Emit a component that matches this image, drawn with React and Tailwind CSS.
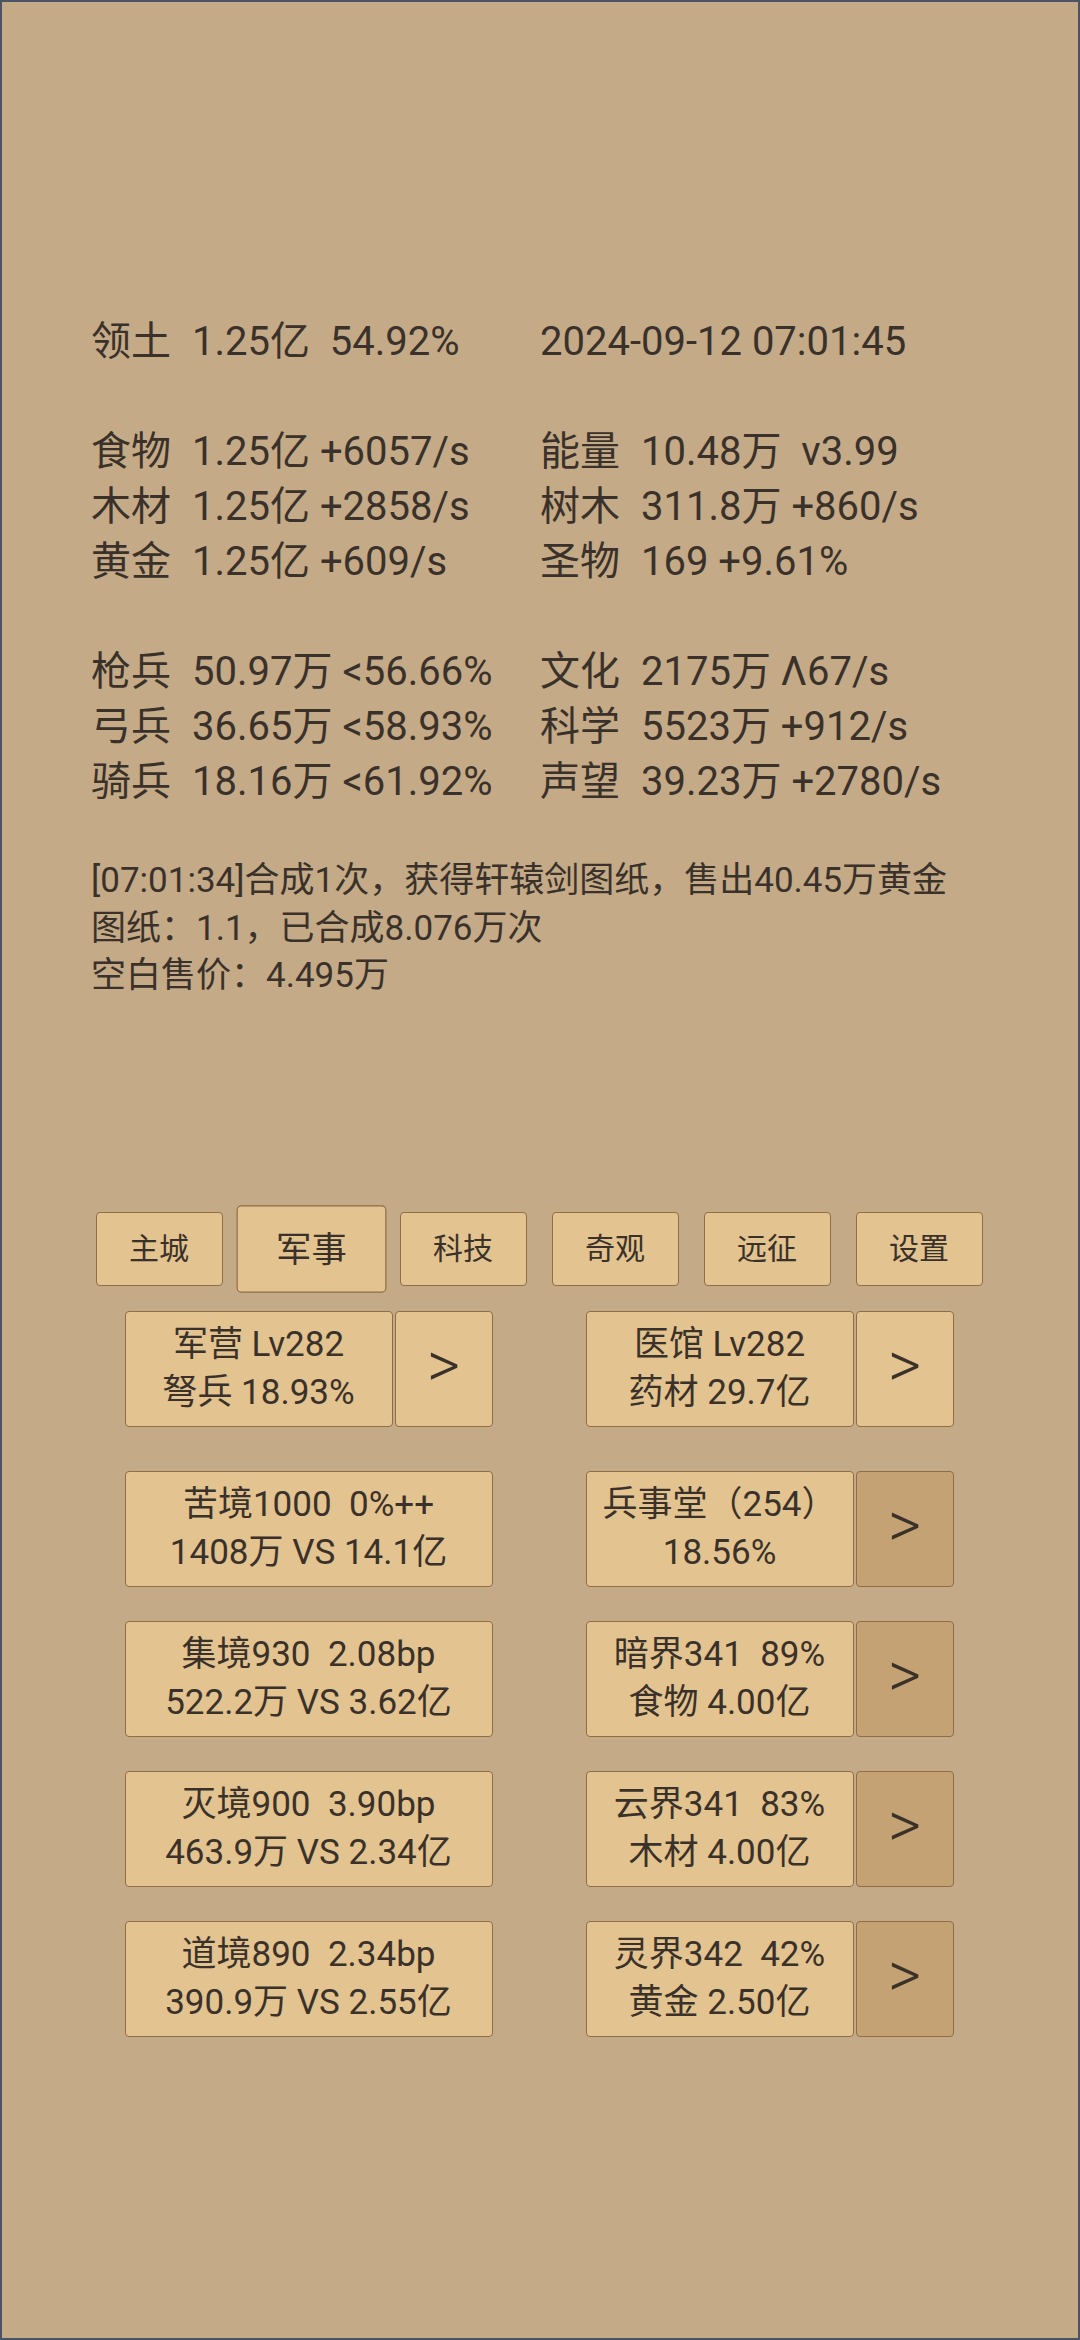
import React from "react";

const font = { fontFamily: "Roboto, 'Noto Sans CJK SC', sans-serif" };

function Stat({ label, value }) {
  return (
    <div className="flex whitespace-pre">
      <span className="w-[101px] shrink-0">{label}</span>
      <span>{value}</span>
    </div>
  );
}

function Btn({ children, className = "" }) {
  return (
    <div
      className={
        "flex flex-col items-center justify-center rounded-[4px] border border-[#8d6e47] text-center whitespace-pre " +
        className
      }
    >
      {children}
    </div>
  );
}

function Arrow({ dark }) {
  return (
    <Btn
      className={
        "w-[98px] h-[116px] text-[64px] font-light leading-none " +
        (dark ? "bg-[#c4a273]" : "bg-[#e3c38f]")
      }
    >
      <span className="-mt-[6px]">&gt;</span>
    </Btn>
  );
}

function Card({ l1, l2, w }) {
  return (
    <Btn className={"h-[116px] bg-[#e3c38f] text-[35px] leading-[48px] " + w}>
      <div>{l1}</div>
      <div>{l2}</div>
    </Btn>
  );
}

export default function App() {
  const tabs = ["主城", "军事", "科技", "奇观", "远征", "设置"];
  const rows = [
    { l: ["苦境1000  0%++", "1408万 VS 14.1亿"], r: ["兵事堂（254）", "18.56%"] },
    { l: ["集境930  2.08bp", "522.2万 VS 3.62亿"], r: ["暗界341  89%", "食物 4.00亿"] },
    { l: ["灭境900  3.90bp", "463.9万 VS 2.34亿"], r: ["云界341  83%", "木材 4.00亿"] },
    { l: ["道境890  2.34bp", "390.9万 VS 2.55亿"], r: ["灵界342  42%", "黄金 2.50亿"] },
  ];
  return (
    <div
      style={font}
      className="w-[1080px] h-[2340px] bg-[#c4aa87] border-2 border-[#4a5466] text-[#3a322a] overflow-hidden"
    >
      <div className="pl-[89px] pt-[312px] text-[40px] leading-[55px]">
        <div className="grid grid-cols-[449px_auto]">
          <Stat label="领土" value="1.25亿  54.92%" />
          <div className="whitespace-pre">2024-09-12 07:01:45</div>
          <div className="h-[55px]" />
          <div className="h-[55px]" />
          <Stat label="食物" value="1.25亿 +6057/s" />
          <Stat label="能量" value="10.48万  v3.99" />
          <Stat label="木材" value="1.25亿 +2858/s" />
          <Stat label="树木" value="311.8万 +860/s" />
          <Stat label="黄金" value="1.25亿 +609/s" />
          <Stat label="圣物" value="169 +9.61%" />
          <div className="h-[55px]" />
          <div className="h-[55px]" />
          <Stat label="枪兵" value="50.97万 <56.66%" />
          <Stat label="文化" value="2175万 Λ67/s" />
          <Stat label="弓兵" value="36.65万 <58.93%" />
          <Stat label="科学" value="5523万 +912/s" />
          <Stat label="骑兵" value="18.16万 <61.92%" />
          <Stat label="声望" value="39.23万 +2780/s" />
        </div>
        <div className="mt-[48px] text-[35px] leading-[47.5px]">
          <div>[07:01:34]合成1次，获得轩辕剑图纸，售出40.45万黄金</div>
          <div>图纸：1.1，已合成8.076万次</div>
          <div>空白售价：4.495万</div>
        </div>
      </div>

      <div className="mt-[212px] flex justify-center gap-[25px] pr-[2px]">
        {tabs.map((t, i) => (
          <Btn
            key={t}
            className={
              "w-[127px] h-[74px] bg-[#e3c38f] text-[30px] " +
              (i === 1 ? "scale-[1.18]" : "")
            }
          >
            {t}
          </Btn>
        ))}
      </div>

      <div className="mt-[25px] flex flex-col items-center pr-[2px]">
        <div className="flex gap-[93px]">
          <div className="flex gap-[2px]">
            <Card w="w-[268px]" l1="军营 Lv282" l2="弩兵 18.93%" />
            <Arrow />
          </div>
          <div className="flex gap-[2px]">
            <Card w="w-[268px]" l1="医馆 Lv282" l2="药材 29.7亿" />
            <Arrow />
          </div>
        </div>
        <div className="mt-[44px] flex flex-col gap-[34px]">
          {rows.map((r, i) => (
            <div key={i} className="flex gap-[93px]">
              <Card w="w-[368px]" l1={r.l[0]} l2={r.l[1]} />
              <div className="flex gap-[2px]">
                <Card w="w-[268px]" l1={r.r[0]} l2={r.r[1]} />
                <Arrow dark />
              </div>
            </div>
          ))}
        </div>
      </div>
    </div>
  );
}
